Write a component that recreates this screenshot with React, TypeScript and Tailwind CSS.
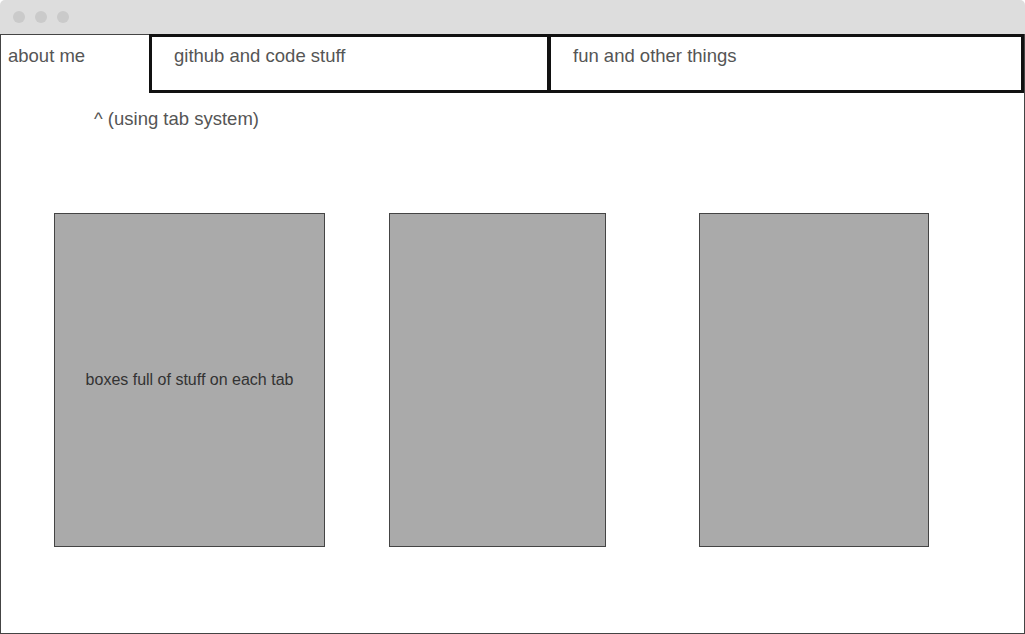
import React from "react";

const tabs = ["about me", "github and code stuff", "fun and other things"];

const App: React.FC = () => {
  return (
    <div className="w-[1025px] h-[634px] bg-white font-['Liberation_Sans',Arial,sans-serif] text-[#555555]">
      {/* title bar */}
      <div className="h-[34px] bg-[#dddddd] rounded-t-[5px] flex items-center pl-[13px] gap-[10px]">
        <span className="w-3 h-3 rounded-full bg-[#cacaca]" />
        <span className="w-3 h-3 rounded-full bg-[#cacaca]" />
        <span className="w-3 h-3 rounded-full bg-[#cacaca]" />
      </div>

      <div className="h-[600px] border-x border-b border-[#444444] flex flex-col">
        {/* tabs */}
        <div className="flex h-[59px]">
          <div className="w-[148px] border-t border-[#444444] pl-[7px] pt-[11px] text-[18.5px] leading-[20px]">
            {tabs[0]}
          </div>
          <div className="w-[402px] border-[3px] border-r-[4px] border-[#111111] pl-[22px] pt-[9px] text-[18.5px] leading-[20px]">
            {tabs[1]}
          </div>
          <div className="flex-1 border-[3px] border-l-0 border-[#111111] pl-[22px] pt-[9px] text-[18.5px] leading-[20px]">
            {tabs[2]}
          </div>
        </div>

        <p className="mt-[16px] pl-[93px] text-[18.5px] leading-[20px]">^ (using tab system)</p>

        {/* boxes */}
        <div className="flex mt-[84px] pl-[53px]">
          <div className="w-[271px] h-[334px] bg-[#aaaaaa] border border-[#444444] flex items-center justify-center text-[16px] text-[#333333]">
            boxes full of stuff on each tab
          </div>
          <div className="ml-[64px] w-[217px] h-[334px] bg-[#aaaaaa] border border-[#444444]" />
          <div className="ml-[93px] w-[230px] h-[334px] bg-[#aaaaaa] border border-[#444444]" />
        </div>
      </div>
    </div>
  );
};

export default App;
